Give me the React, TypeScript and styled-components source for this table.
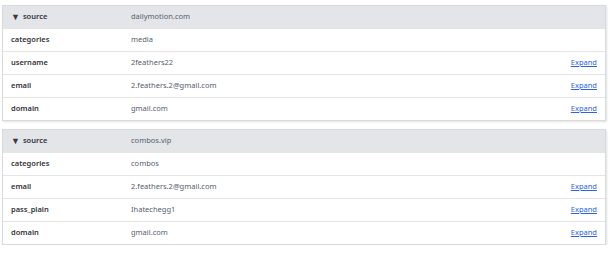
import React from 'react';
import styled, { createGlobalStyle } from 'styled-components';

interface FieldRow {
    name: string;
    value: string;
    expandable?: boolean;
}

interface SourceRecord {
    source: string;
    fields: FieldRow[];
}

const records: SourceRecord[] = [
    {
        source: 'dailymotion.com',
        fields: [
            { name: 'categories', value: 'media' },
            { name: 'username', value: '2feathers22', expandable: true },
            { name: 'email', value: '2.feathers.2@gmail.com', expandable: true },
            { name: 'domain', value: 'gmail.com', expandable: true },
        ],
    },
    {
        source: 'combos.vip',
        fields: [
            { name: 'categories', value: 'combos' },
            { name: 'email', value: '2.feathers.2@gmail.com', expandable: true },
            { name: 'pass_plain', value: 'Ihatechegg1', expandable: true },
            { name: 'domain', value: 'gmail.com', expandable: true },
        ],
    },
];

const GlobalStyle = createGlobalStyle`
    body {
        margin: 0;
        background: #fff;
        font-family: 'Noto Sans', 'Open Sans', sans-serif;
    }
`;

export default function App(): JSX.Element {
    return (
        <>
            <GlobalStyle />
            <Page>
                {records.map((rec) => (
                    <Card key={rec.source}>
                        <HeaderRow>
                            <KeyCell>
                                <Caret>▼</Caret>source
                            </KeyCell>
                            <ValueCell>{rec.source}</ValueCell>
                        </HeaderRow>
                        {rec.fields.map((f) => (
                            <Row key={f.name}>
                                <KeyCell>{f.name}</KeyCell>
                                <ValueCell>{f.value}</ValueCell>
                                {f.expandable && <ExpandLink href="#">Expand</ExpandLink>}
                            </Row>
                        ))}
                    </Card>
                ))}
            </Page>
        </>
    );
}

const Page = styled.div`
    padding: 5px 8px 0 2px;
    display: flex;
    flex-direction: column;
    gap: 8px;
`;

const Card = styled.section`
    border: 1px solid #d9dadd;
    box-shadow: 1px 1px 2px rgba(0, 0, 0, 0.12);
    background: #fff;
`;

const Row = styled.div`
    display: flex;
    align-items: center;
    height: 22px;
    padding: 0 8px 2px;
    box-sizing: border-box;
    height: 23px;
    border-top: 1px solid #e4e4e6;
    font-size: 7.5px;
`;

const HeaderRow = styled(Row)`
    background: #e4e5e9;
    border-top: none;
    height: 22px;
`;

const KeyCell = styled.div`
    width: 120px;
    font-weight: 600;
    color: #333339;
    display: flex;
    align-items: center;
`;

const Caret = styled.span`
    font-size: 9px;
    margin-right: 3px;
    color: #3a3a40;
`;

const ValueCell = styled.div`
    flex: 1;
    color: #56606e;
`;

const ExpandLink = styled.a`
    color: #2b63e0;
    text-decoration: underline;
    font-size: 7.5px;
`;
